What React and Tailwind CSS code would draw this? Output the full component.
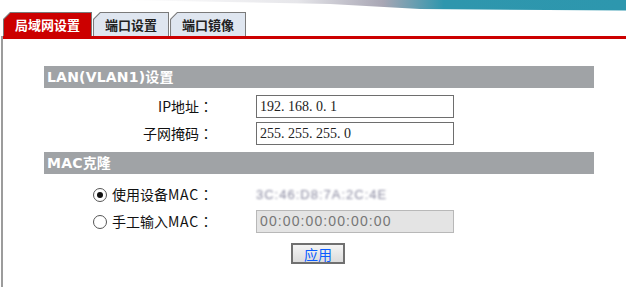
import React from 'react';

const Tab = ({ label, active }) => (
  <div
    className="bg-[#7a7a7a] pt-[1px] px-[1px] h-[24px]"
    style={{ clipPath: 'polygon(7px 0, 100% 0, 100% 100%, 0 100%, 0 7px)' }}
  >
    <div
      className={
        'h-full flex items-center justify-center font-bold text-[13px] leading-none ' +
        (active ? 'bg-[#cc0000] text-white px-[11px]' : 'bg-[#dfe6f0] text-[#222] px-[11px]')
      }
      style={{ clipPath: 'polygon(6.5px 0, 100% 0, 100% 100%, 0 100%, 0 6.5px)' }}
    >
      {label}
    </div>
  </div>
);

const SectionHeader = ({ children }) => (
  <div className="h-[22px] bg-[#a0a3a6] flex items-center pl-[3px] text-white font-bold text-[14px] font-['DejaVu_Sans','Noto_Sans_CJK_SC',sans-serif] tracking-[0.2px]">
    {children}
  </div>
);

const Radio = ({ checked }) => (
  <span className="w-[14px] h-[14px] rounded-full border border-[#555] bg-white flex items-center justify-center mr-[5px]">
    {checked && <span className="w-[6px] h-[6px] rounded-full bg-[#111]"></span>}
  </span>
);

const Colon = () => <span className="font-['Noto_Sans_CJK_TC',sans-serif]">：</span>;

const Row = ({ label, children }) => (
  <div className="h-[27px] flex items-center">
    <div className="w-[169px] flex justify-end items-center text-[14px] text-[#111]">
      {label}
      <Colon />
    </div>
    <div className="ml-[43px] flex items-center">{children}</div>
  </div>
);

export default function App() {
  return (
    <div className="w-[626px] h-[287px] bg-white overflow-hidden font-['Noto_Sans_CJK_SC',sans-serif]">
      {/* banner strip */}
      <svg width="626" height="11" className="block">
        <defs>
          <linearGradient id="bn" x1="0" x2="1" y1="0" y2="0">
            <stop offset="0" stopColor="#ffffff" />
            <stop offset="0.35" stopColor="#e6e6ea" />
            <stop offset="0.52" stopColor="#a8a6b4" />
            <stop offset="0.64" stopColor="#2e96ad" />
            <stop offset="1" stopColor="#2d97ae" />
          </linearGradient>
        </defs>
        <polygon points="120,0 626,0 626,10.5 420,9 330,4 200,1.5" fill="url(#bn)" />
      </svg>

      <div className="flex gap-[1px] pl-[3px] mt-[1px]">
        <Tab label="局域网设置" active />
        <Tab label="端口设置" />
        <Tab label="端口镜像" />
      </div>

      <div className="ml-[1px] border-l-2 border-[#9c9c9c] h-full">
        <div className="h-[3px] bg-[#cc0000]"></div>

        <div className="ml-[41px] mr-[32px] pt-[27px]">
          <SectionHeader>LAN(VLAN1)设置</SectionHeader>
          <div className="pt-[5px]">
            <Row label="IP地址">
              <div className="w-[198px] h-[23px] border border-[#6e6e6e] bg-white flex items-center pl-[3px] text-[14px] text-[#222] font-['Liberation_Serif',serif]">
                192. 168. 0. 1
              </div>
            </Row>
            <Row label="子网掩码">
              <div className="w-[198px] h-[23px] border border-[#6e6e6e] bg-white flex items-center pl-[3px] text-[14px] text-[#222] font-['Liberation_Serif',serif]">
                255. 255. 255. 0
              </div>
            </Row>
          </div>

          <div className="mt-[5px]">
            <SectionHeader>MAC克隆</SectionHeader>
          </div>
          <div className="pt-[7px]">
            <Row label={<><Radio checked />使用设备<span className="tracking-[0.8px]">MAC</span></>}>
              <span className="text-[13px] text-[#8a8aa0] blur-[1.2px] tracking-[1px] font-['Liberation_Sans',sans-serif]">
                3C:46:D8:7A:2C:4E
              </span>
            </Row>
            <Row label={<><Radio />手工输入<span className="tracking-[0.8px]">MAC</span></>}>
              <div className="w-[198px] h-[23px] border border-[#b8b8b8] bg-[#e4e4e4] flex items-center pl-[3px] text-[14px] text-[#777] tracking-[1.1px] font-['Liberation_Sans',sans-serif]">
                00:00:00:00:00:00
              </div>
            </Row>
          </div>

          <div className="flex pt-[8px]">
            <button className="ml-[247px] w-[54px] h-[21px] border-2 border-[#707070] bg-gradient-to-b from-[#f4f4f4] to-[#dcdcdc] text-[#0a5cff] text-[14px] leading-none flex items-center justify-center">
              应用
            </button>
          </div>
        </div>
      </div>
    </div>
  );
}
